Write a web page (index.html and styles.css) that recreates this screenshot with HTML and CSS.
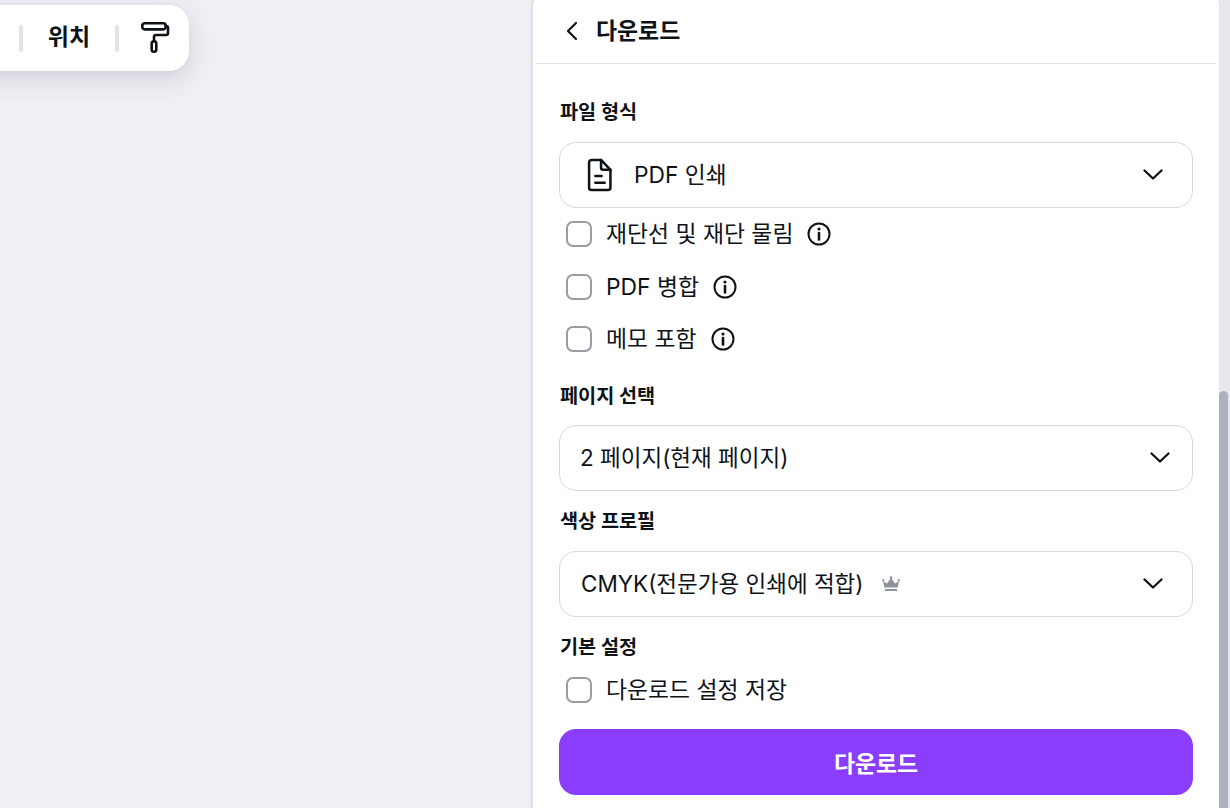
FILE: index.html
```html
<!DOCTYPE html>
<html lang="ko">
<head>
<meta charset="utf-8">
<title>다운로드</title>
<link rel="stylesheet" href="styles.css">
</head>
<body>
<main class="canvas">
  <div class="toolbar">
    <span class="tb-sep"></span>
    <span class="tb-label">위치</span>
    <span class="tb-sep"></span>
    <svg class="tb-icon" viewBox="0 0 32 36" fill="none" stroke="#0e1318" stroke-width="2.6" stroke-linejoin="round" stroke-linecap="round">
      <rect x="2.300" y="4.300" width="23.400" height="6.100" rx="2.400"/>
      <path d="M25.700 7H26a2 2 0 0 1 2 2v5a2 2 0 0 1-2 2H16a2 2 0 0 0-2 2v4.300"/>
      <rect x="11.700" y="22.300" width="4.600" height="10.400" rx="2.300"/>
    </svg>
  </div>
</main>
<aside class="panel">
  <header class="panel-head">
    <svg class="back" viewBox="0 0 12 20" fill="none" stroke="#0e1318" stroke-width="2.200" stroke-linecap="round" stroke-linejoin="round"><path d="M10 2 2 10l8 8"/></svg>
    <h1 class="panel-title">다운로드</h1>
  </header>
  <div class="panel-body">
    <h2 class="label label-first">파일 형식</h2>
    <div class="select select-file">
      <svg class="file-icon" viewBox="0 0 24 32" fill="none" stroke="#0e1318" stroke-width="2.4" stroke-linejoin="round" stroke-linecap="round">
        <path d="M4.5 1.5h9L22.5 11v17a2.5 2.5 0 0 1-2.5 2.5H4.5A2.5 2.5 0 0 1 2 28V4a2.5 2.5 0 0 1 2.5-2.5Z"/>
        <path d="M13.5 1.5V9a2 2 0 0 0 2 2h7M8 17h6M8 23.500h9"/>
      </svg>
      <span class="select-text">PDF 인쇄</span>
      <svg class="chev" viewBox="0 0 20 12" fill="none" stroke="#0e1318" stroke-width="2.300" stroke-linecap="round" stroke-linejoin="round"><path d="M1.500 1.500 10 9.500l8.500-8"/></svg>
    </div>
    <div class="check-row check-first">
      <span class="box"></span><span class="check-text">재단선 및 재단 물림</span>
      <svg class="info" viewBox="0 0 24 24" fill="none" stroke="#0e1318" stroke-width="2"><circle cx="12" cy="12" r="10.500"/><path d="M12 11v6.500" stroke-width="2.600" stroke-linecap="round"/><circle cx="12" cy="7" r="1.600" fill="#0e1318" stroke="none"/></svg>
    </div>
    <div class="check-row">
      <span class="box"></span><span class="check-text">PDF 병합</span>
      <svg class="info" viewBox="0 0 24 24" fill="none" stroke="#0e1318" stroke-width="2"><circle cx="12" cy="12" r="10.500"/><path d="M12 11v6.500" stroke-width="2.600" stroke-linecap="round"/><circle cx="12" cy="7" r="1.600" fill="#0e1318" stroke="none"/></svg>
    </div>
    <div class="check-row">
      <span class="box"></span><span class="check-text">메모 포함</span>
      <svg class="info" viewBox="0 0 24 24" fill="none" stroke="#0e1318" stroke-width="2"><circle cx="12" cy="12" r="10.500"/><path d="M12 11v6.500" stroke-width="2.600" stroke-linecap="round"/><circle cx="12" cy="7" r="1.600" fill="#0e1318" stroke="none"/></svg>
    </div>
    <h2 class="label label-pages">페이지 선택</h2>
    <div class="select select-pages">
      <span class="select-text">2 페이지(현재 페이지)</span>
      <svg class="chev" viewBox="0 0 20 12" fill="none" stroke="#0e1318" stroke-width="2.300" stroke-linecap="round" stroke-linejoin="round"><path d="M1.500 1.500 10 9.500l8.500-8"/></svg>
    </div>
    <h2 class="label label-color">색상 프로필</h2>
    <div class="select select-color">
      <span class="select-text">CMYK(전문가용 인쇄에 적합)</span>
      <svg class="crown" viewBox="0 0 20 18" fill="#8f939b"><path d="M2.500 12.800h15L19 5.500l-4.500 2.800L10 2 5.500 8.300 1 5.500Z"/><circle cx="10" cy="1.800" r="1.500"/><circle cx="1.300" cy="4.800" r="1.300"/><circle cx="18.700" cy="4.800" r="1.300"/><rect x="3" y="14.500" width="14" height="2.500" rx="1"/></svg>
      <svg class="chev" viewBox="0 0 20 12" fill="none" stroke="#0e1318" stroke-width="2.300" stroke-linecap="round" stroke-linejoin="round"><path d="M1.500 1.500 10 9.500l8.500-8"/></svg>
    </div>
    <h2 class="label label-pref">기본 설정</h2>
    <div class="check-row check-pref">
      <span class="box"></span><span class="check-text">다운로드 설정 저장</span>
    </div>
    <button class="download" type="button">다운로드</button>
  </div>
</aside>
<div class="scrollbar"><div class="thumb"></div></div>
</body>
</html>
```

FILE: styles.css
```css
* { box-sizing: border-box; }
html, body { margin: 0; height: 808px; overflow: hidden; }
body {
  display: flex;
  background: #eff0f4;
  font-family: Inter, "Noto Sans CJK KR", sans-serif;
  color: #0e1318;
}
.canvas { position: relative; width: 533px; flex: none; }
.toolbar {
  position: absolute;
  left: -40px;
  top: 5px;
  width: 229px;
  height: 66px;
  display: flex;
  align-items: center;
  padding-left: 59px;
  background: #fff;
  border-radius: 20px;
  box-shadow: 0 8px 24px rgba(60, 70, 100, .18), 0 0 4px rgba(60, 70, 100, .06);
}
.tb-sep { width: 4px; height: 27px; border-radius: 2px; background: #e1e3e8; flex: none; }
.tb-label { width: 92px; text-align: center; font-size: 23px; font-weight: 700; line-height: 30px; padding-bottom: 2px; }
.tb-icon { width: 32px; height: 36px; margin-left: 21px; flex: none; margin-top: -2px; }

.panel {
  width: 686px;
  flex: none;
  height: 816px;
  margin-top: -8px;
  padding-top: 8px;
  background: #fff;
  border-radius: 14px 14px 0 0;
  box-shadow: -1px 0 3px rgba(60, 70, 100, .16);
  display: flex;
  flex-direction: column;
}
.panel-head {
  height: 64px;
  margin: 0 3px;
  flex: none;
  display: flex;
  align-items: center;
  border-bottom: 1px solid #e2e2e6;
  padding-left: 30px;
  padding-bottom: 2px;
}
.back { width: 12px; height: 20px; flex: none; }
.panel-title { margin: 0 0 0 18px; font-size: 22.900px; font-weight: 700; line-height: 30px; }
.panel-body { padding: 0 26px; display: flex; flex-direction: column; }
.label { margin: 0; padding-left: 1px; font-size: 19.700px; line-height: 28px; font-weight: 700; }
.label-first { margin-top: 34px; }
.label-pages { margin-top: 16px; }
.label-color { margin-top: 16px; }
.label-pref { margin-top: 16px; }
.select {
  height: 66px;
  border: 1px solid #d8d9de;
  border-radius: 17px;
  display: flex;
  align-items: center;
  font-size: 22.500px;
  flex: none;
}
.select-file { margin-top: 16px; padding-left: 27px; font-size: 22.750px; }
.select-pages { margin-top: 15px; padding-left: 20px; }
.select-color { margin-top: 16px; padding-left: 21px; }
.select-text { line-height: 30px; }
.select-file .select-text { margin-left: 22px; }
.file-icon { width: 25px; height: 34px; flex: none; }
.chev { width: 20px; height: 12px; margin-left: auto; flex: none; margin-right: 29px; }
.select-pages .chev { margin-right: 22px; }
.crown { width: 18px; height: 16px; margin-left: 18px; flex: none; }
.crown + .chev { margin-left: auto; }
.check-row { height: 52.500px; display: flex; align-items: center; padding-left: 7px; flex: none; }
.check-first { margin-top: 0; }
.box {
  width: 26px;
  height: 26px;
  border: 2px solid #9a9ca3;
  border-radius: 7px;
  background: #fff;
  flex: none;
}
.check-text { margin-left: 14px; font-size: 22.850px; line-height: 30px; }
.info { width: 24px; height: 24px; margin-left: 14px; flex: none; }
.check-pref { height: 40px; margin-top: 9px; }
.download {
  margin-top: 19px;
  height: 66px;
  flex: none;
  border: 0;
  border-radius: 17px;
  background: #8b3dff;
  color: #fff;
  font-family: inherit;
  font-size: 22.900px;
  font-weight: 700;
}
.scrollbar { width: 11px; flex: none; background: #e6e8ee; padding-top: 391px; height: 808px; }
.thumb { width: 9px; height: 417px; background: #adb1bc; border-radius: 5px 5px 0 0; }
```
